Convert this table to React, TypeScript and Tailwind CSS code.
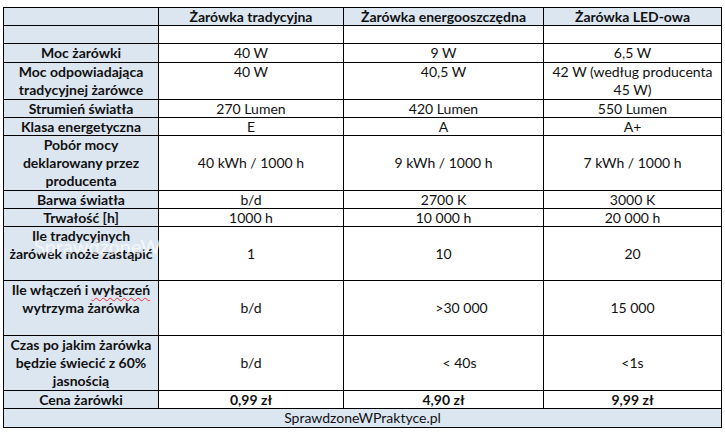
import React from "react";

type Row = {
  label: React.ReactNode;
  vals: React.ReactNode[];
  h: number;
  labelTop?: boolean;
  valsTop?: boolean;
  bold?: boolean;
};

const ROWS: Row[] = [
  { label: "", vals: ["", "", ""], h: 18 },
  { label: "Moc żarówki", vals: ["40 W", "9 W", "6,5 W"], h: 19 },
  {
    label: (
      <>
        Moc odpowiadająca
        <br />
        tradycyjnej żarówce
      </>
    ),
    vals: [
      "40 W",
      "40,5 W",
      <>
        42 W (według producenta
        <br />
        45 W)
      </>,
    ],
    h: 37,
    labelTop: true,
    valsTop: true,
  },
  { label: "Strumień światła", vals: ["270 Lumen", "420 Lumen", "550 Lumen"], h: 18 },
  { label: "Klasa energetyczna", vals: ["E", "A", "A+"], h: 18 },
  {
    label: (
      <>
        Pobór mocy
        <br />
        deklarowany przez
        <br />
        producenta
      </>
    ),
    vals: ["40 kWh / 1000 h", "9 kWh / 1000 h", "7 kWh / 1000 h"],
    h: 55,
  },
  { label: "Barwa światła", vals: ["b/d", "2700 K", "3000 K"], h: 18 },
  { label: "Trwałość [h]", vals: ["1000 h", "10 000 h", "20 000 h"], h: 18 },
  {
    label: (
      <>
        Ile tradycyjnych
        <br />
        żarówek może zastąpić
      </>
    ),
    vals: ["1", "10", "20"],
    h: 54,
    labelTop: true,
  },
  {
    label: (
      <>
        Ile włączeń i{" "}
        <span className="underline decoration-wavy decoration-red-500 decoration-1 underline-offset-2">
          wyłączeń
        </span>
        <br />
        wytrzyma żarówka
      </>
    ),
    vals: ["b/d", <span className="pl-9">&gt;30 000</span>, "15 000"],
    h: 55,
    labelTop: true,
  },
  {
    label: (
      <>
        Czas po jakim żarówka
        <br />
        będzie świecić z 60%
        <br />
        jasnością
      </>
    ),
    vals: ["b/d", <span className="pl-8">&lt; 40s</span>, "<1s"],
    h: 55,
  },
  { label: "Cena żarówki", vals: ["0,99 zł", "4,90 zł", "9,99 zł"], h: 18, bold: true },
];

const HEAD = ["Żarówka tradycyjna", "Żarówka energooszczędna", "Żarówka LED-owa"];

export default function App() {
  return (
    <div className="w-[725px] h-[432px] bg-white pt-[7px] pl-[3px] font-['Lato','Liberation_Sans',sans-serif] text-[14px] leading-[18px] text-[#111]">
      <div className="relative w-[719px] border-l border-t border-black grid grid-cols-[155px_185px_200px_178px]">
        {/* header */}
        <div className="h-[18px] bg-[#dce6f1] border-r border-b border-black" />
        {HEAD.map((t, i) => (
          <div
            key={i}
            className="h-[18px] bg-[#dce6f1] border-r border-b border-black font-bold text-center"
          >
            {t}
          </div>
        ))}

        {ROWS.map((r, ri) => (
          <React.Fragment key={ri}>
            <div
              style={{ height: r.h }}
              className={`bg-[#dce6f1] border-r border-b border-black font-bold text-center flex flex-col ${
                r.labelTop ? "justify-start" : "justify-center"
              }`}
            >
              <div>{r.label}</div>
            </div>
            {r.vals.map((v, vi) => (
              <div
                key={vi}
                style={{ height: r.h }}
                className={`border-r border-b border-black text-center flex flex-col ${
                  r.valsTop ? "justify-start" : "justify-center"
                } ${r.bold ? "font-bold" : ""}`}
              >
                <div>{v}</div>
              </div>
            ))}
          </React.Fragment>
        ))}

        {/* footer */}
        <div className="col-span-4 h-[19px] bg-[#dce6f1] border-r border-b border-black text-center">
          SprawdzoneWPraktyce.pl
        </div>

        <div className="absolute left-[30px] top-[229px] text-[20px] text-white/70 pointer-events-none">
          SprawdzoneWP
        </div>
      </div>
    </div>
  );
}
